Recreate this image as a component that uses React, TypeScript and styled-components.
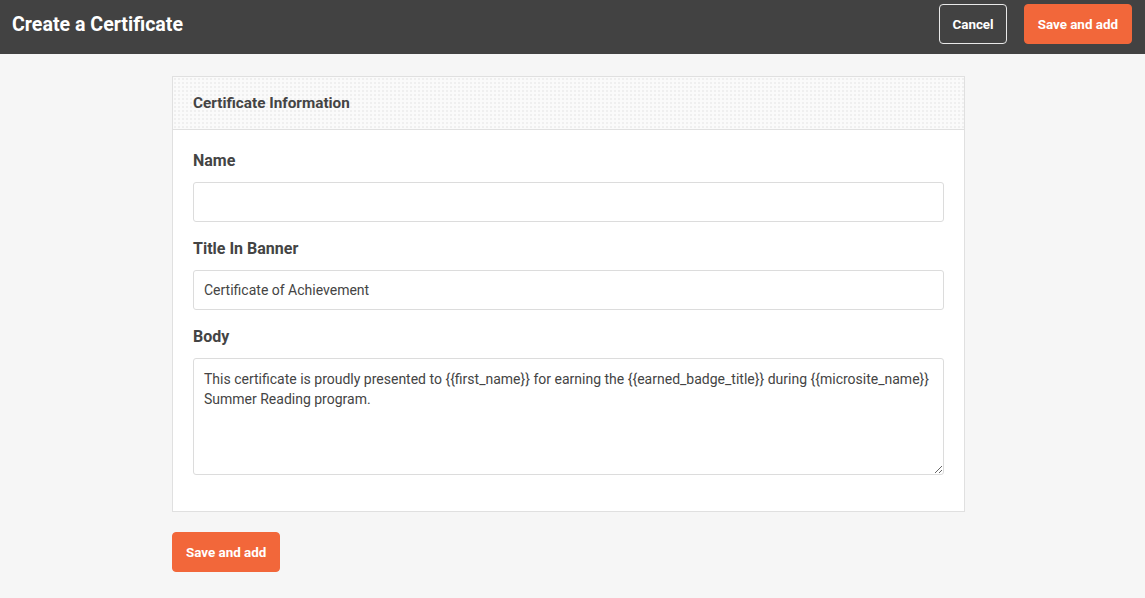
import React from "react";
import styled, { createGlobalStyle } from "styled-components";

const Global = createGlobalStyle`
  html, body { margin: 0; padding: 0; background: #f6f6f6; }
  body { font-family: Roboto, "Liberation Sans", Arial, sans-serif; color: #444; }
  * { box-sizing: border-box; }
`;

const Page = styled.div`
  min-height: 598px;
  background: #f6f6f6;
`;

const TopBar = styled.header`
  height: 54px;
  background: #424242;
  display: flex;
  align-items: center;
  justify-content: space-between;
  padding: 0 13px 6px 12px;
`;

const PageTitle = styled.h1`
  margin: 0;
  font-size: 19.6px;
  font-weight: 700;
  color: #fff;
`;

const Actions = styled.div`
  display: flex;
  align-items: center;
  gap: 17px;
`;

const Button = styled.button<{ $variant?: "primary" | "outline" }>`
  height: 40px;
  padding: 0 ${(p) => (p.$variant === "outline" ? "12px" : "13px")};
  border-radius: 4px;
  font-family: Roboto, "Liberation Sans", Arial, sans-serif;
  font-size: 13.4px;
  font-weight: 700;
  color: #fff;
  cursor: pointer;
  background: ${(p) => (p.$variant === "outline" ? "transparent" : "#f2673a")};
  border: 1px solid ${(p) => (p.$variant === "outline" ? "#e8e8e8" : "#f2673a")};
`;

const Main = styled.main`
  padding: 22px 180px 26px 172px;
`;

const Card = styled.section`
  background: #fff;
  border: 1px solid #e0e0e0;
`;

const CardHeader = styled.div`
  height: 53px;
  display: flex;
  align-items: center;
  padding: 0 20px;
  border-bottom: 1px solid #e0e0e0;
  background-color: #fafafa;
  background-image: radial-gradient(circle, #efefef 0.8px, transparent 1px);
  background-size: 4px 4px;
`;

const CardTitle = styled.h2`
  margin: 0;
  font-size: 15.3px;
  font-weight: 700;
  color: #444;
`;

const CardBody = styled.div`
  padding: 20px;
`;

const Group = styled.div`
  margin-bottom: 16px;
`;

const Label = styled.label`
  display: block;
  font-size: 16px;
  font-weight: 700;
  line-height: 22px;
  color: #444;
  margin-bottom: 10px;
`;

const fieldCss = `
  width: 100%;
  border: 1px solid #dcdcdc;
  border-radius: 3px;
  background: #fff;
  font-family: Roboto, "Liberation Sans", Arial, sans-serif;
  font-size: 14px;
  color: #444;
  padding: 0 10px;
  outline: none;
  display: block;
`;

const Input = styled.input`
  ${fieldCss}
  height: 40px;
`;

const TextArea = styled.textarea`
  ${fieldCss}
  height: 117px;
  padding: 10px 10px;
  line-height: 20px;
  resize: vertical;
`;

const Footer = styled.div`
  margin-top: 20px;
`;

export default function App() {
  return (
    <Page>
      <Global />
      <TopBar>
        <PageTitle>Create a Certificate</PageTitle>
        <Actions>
          <Button $variant="outline">Cancel</Button>
          <Button>Save and add</Button>
        </Actions>
      </TopBar>
      <Main>
        <Card>
          <CardHeader>
            <CardTitle>Certificate Information</CardTitle>
          </CardHeader>
          <CardBody>
            <Group>
              <Label>Name</Label>
              <Input defaultValue="" />
            </Group>
            <Group>
              <Label>Title In Banner</Label>
              <Input defaultValue="Certificate of Achievement" />
            </Group>
            <Group>
              <Label>Body</Label>
              <TextArea defaultValue="This certificate is proudly presented to {{first_name}} for earning the {{earned_badge_title}} during {{microsite_name}} Summer Reading program." />
            </Group>
          </CardBody>
        </Card>
        <Footer>
          <Button>Save and add</Button>
        </Footer>
      </Main>
    </Page>
  );
}
